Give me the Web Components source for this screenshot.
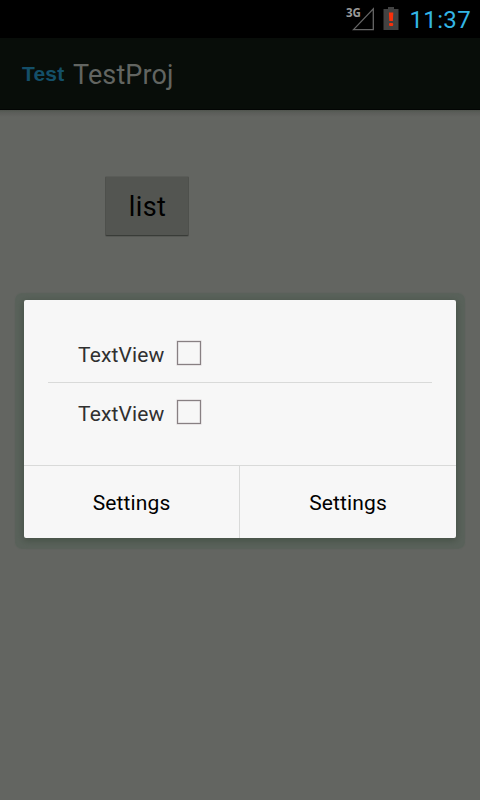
<!DOCTYPE html>
<html lang="en"><head><meta charset="utf-8"><title>TestProj</title>
<style>html,body{margin:0;height:100%;background:#636561;overflow:hidden}</style></head>
<body>
<phone-screen>
  <status-bar slot="status">11:37</status-bar>
  <action-bar slot="bar" logo="Test">TestProj</action-bar>
  <grey-button>list</grey-button>
  <alert-dialog slot="dialog">
    <check-row>TextView</check-row>
    <check-row>TextView</check-row>
    <dialog-button slot="actions">Settings</dialog-button>
    <dialog-button slot="actions">Settings</dialog-button>
  </alert-dialog>
</phone-screen>
<script>
const define = (name, html) => customElements.define(name, class extends HTMLElement {
  constructor() {
    super();
    const t = document.createElement('template');
    t.innerHTML = html;
    this.attachShadow({mode: 'open'}).append(t.content.cloneNode(true));
  }
  connectedCallback() {
    const logo = this.shadowRoot.querySelector('.logo');
    if (logo) logo.textContent = this.getAttribute('logo');
  }
});
define('phone-screen', `<style>
:host{display:flex;flex-direction:column;position:relative;width:480px;height:800px;background:#636561;font-family:Roboto,sans-serif;overflow:hidden}
main{flex:1;padding:66px 0 0 105px;background:linear-gradient(#50544e 0,#595d58 2px,#5e5f5c 4px,#636561 7px)}
.overlay{position:absolute;left:24px;top:300px;width:432px}
</style><slot name="status"></slot><slot name="bar"></slot><main><slot></slot></main><div class="overlay"><slot name="dialog"></slot></div>`);
define('status-bar', `<style>
:host{display:flex;height:38px;background:#000;color:#33b5e5;align-items:center;justify-content:flex-end;box-sizing:border-box;padding-right:9px}
svg{display:block;width:62px;height:38px;overflow:visible}
.net{font:bold 13px "Open Sans",sans-serif;fill:#9a9a9a}
.time{font-size:24px;line-height:38px;letter-spacing:.35px;padding-top:2px;width:62px;text-align:right;white-space:nowrap}
</style><svg viewBox="0 0 62 38"><text class="net" x="-1" y="17" textLength="15" lengthAdjust="spacingAndGlyphs">3G</text><path d="M6.500 29.600 26.300 8.800V29.600Z" fill="none" stroke="#666" stroke-width="1.300"/><path d="M41 7h6v2h4.500v21H36.500V9h4.500Z" fill="#424242"/><path d="M41.900 12.500h4.400l-.4 8.500h-3.600z" fill="#f8300b"/><rect x="42" y="23" width="4.200" height="3" rx="1" fill="#f8300b"/></svg><div class="time"><slot></slot></div>`);
define('action-bar', `<style>
:host{display:flex;height:72px;background:#080d09;align-items:center;box-sizing:border-box;border-bottom:1px solid #030504;padding-left:22px}
.logo{font:bold 21px "Liberation Sans",sans-serif;color:#144f68;width:51px;letter-spacing:.2px}
.title{font-size:27px;color:#626561;padding-top:2px;letter-spacing:.12px}
</style><div class="logo"></div><div class="title"><slot></slot></div>`);
define('grey-button', `<style>
:host{display:flex;width:84px;height:60px;box-sizing:border-box;align-items:center;justify-content:center;background:#535551;border-radius:2px;border:1px solid #4e504c;border-top-color:#5a5c58;border-bottom-color:#393c38;box-shadow:0 1px 0 #575955;color:#000;font-size:27px;letter-spacing:.4px;padding:1px 0 0 1px}
</style><slot></slot>`);
define('alert-dialog', `<style>
:host{display:flex;flex-direction:column;height:238px;background:#f7f7f7;border-radius:2px;box-shadow:0 2px 7px 1px #465247,0 2px 1px 9px rgba(75,94,82,.38)}
.list{height:165px;box-sizing:border-box;padding:24px 24px 0}
.actions{display:grid;grid-template-columns:216px 216px;height:72px;border-top:1px solid #d9dad9}
</style><div class="list"><slot></slot></div><div class="actions"><slot name="actions"></slot></div>`);
define('check-row', `<style>
:host{display:flex;height:58px;align-items:center;padding-left:30px;color:#303030;font-size:21px}
:host(:first-child){border-bottom:1px solid #d9dad9}
span{width:99px;letter-spacing:.13px;padding-top:4px}
i{width:24px;height:24px;box-sizing:border-box;border:1px solid #888083;box-shadow:0 0 0 .5px #d4cfd1,inset 0 0 0 .5px #d4cfd1}
</style><span><slot></slot></span><i></i>`);
define('dialog-button', `<style>
:host{display:flex;box-sizing:border-box;align-items:center;justify-content:center;color:#000;font-size:21px;letter-spacing:.13px;padding-top:2px}
:host(:not(:last-child)){border-right:1px solid #d9dad9}
</style><slot></slot>`);
</script>
</body></html>
